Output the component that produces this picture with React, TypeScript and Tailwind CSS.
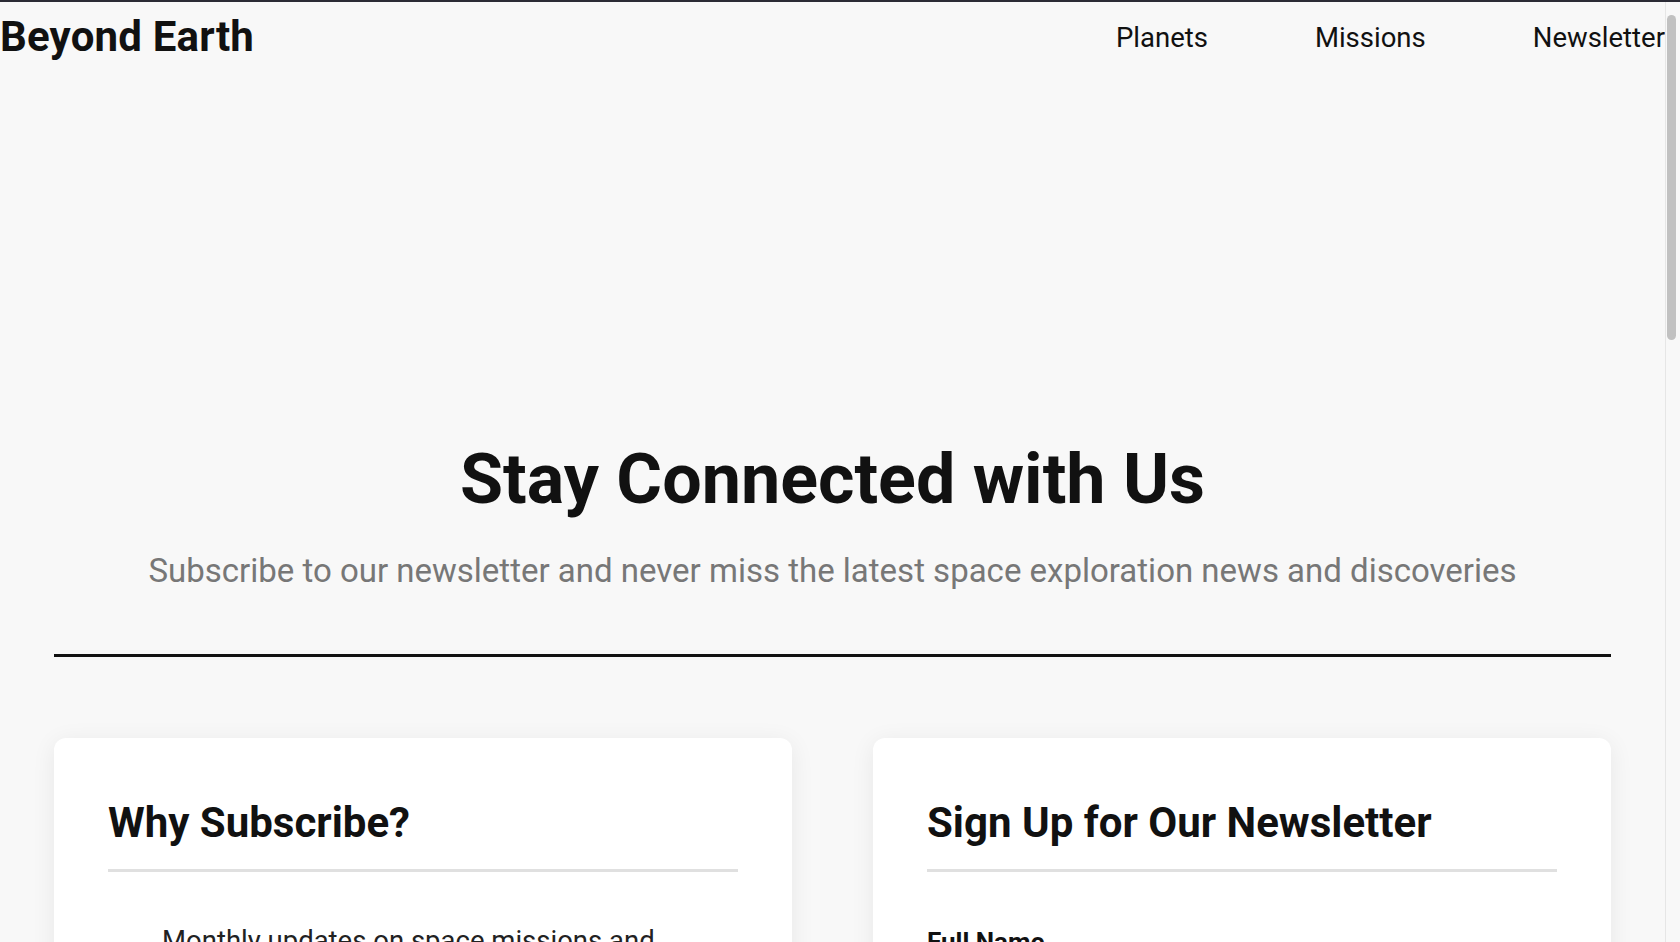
const navLinks = ["Planets", "Missions", "Newsletter"];

const perks = [
  "Monthly updates on space missions and discoveries",
  "Exclusive interviews with astronauts and scientists",
  "Early access to launch schedules and live events",
  "Stunning imagery from telescopes and probes",
  "Curated reading lists for space enthusiasts",
];

const interests = ["Planetary Science", "Human Spaceflight", "Deep Space Telescopes", "Rocket Launches"];

function Field({ label, type, placeholder }: { label: string; type: string; placeholder: string }) {
  return (
    <label className="flex flex-col gap-[14px]">
      <span className="text-[26px] font-bold leading-none">{label}</span>
      <input
        type={type}
        placeholder={placeholder}
        className="h-[64px] rounded-[8px] border-2 border-[#dcdcdc] bg-[#fafafa] px-5 text-[22px] outline-none"
      />
    </label>
  );
}

export default function App() {
  return (
    <div className="min-h-screen border-t-2 border-[#2b2b35] bg-[#f8f8f8] pr-[15px] font-['Roboto',sans-serif] text-[#111]">
      {/* fake classic scrollbar, as in the capture */}
      <div className="fixed right-0 top-[2px] bottom-0 w-[15px] border-l border-[#e6e6e6] bg-[#f8f8f8]">
        <div className="ml-[1px] mt-[13px] h-[325px] w-[9px] rounded-full bg-[#c1c1c1]" />
      </div>

      <header className="flex h-[68px] items-start justify-between">
        <a href="#" className="mt-[14px] text-[42px] font-bold leading-none tracking-[0.2px]">
          Beyond Earth
        </a>
        <nav className="mt-[22px] flex gap-[107px] text-[27.5px] leading-none">
          {navLinks.map((l) => (
            <a key={l} href="#">{l}</a>
          ))}
        </nav>
      </header>

      <main className="px-[54px]">
        <section className="pt-[374px] text-center">
          <h1 className="text-[70px] font-bold leading-none">Stay Connected with Us</h1>
          <p className="mt-[40px] text-[33px] leading-none text-[#777]">
            Subscribe to our newsletter and never miss the latest space exploration news and discoveries
          </p>
        </section>

        <div className="mt-[67px] h-[3px] bg-[#111]" />

        <div className="mt-[81px] grid grid-cols-2 gap-[81px]">
          <div className="rounded-[12px] bg-white px-[54px] pb-[60px] pt-[64px] shadow-[0_4px_24px_rgba(0,0,0,0.07)]">
            <h2 className="text-[42px] font-bold leading-none">Why Subscribe?</h2>
            <div className="mt-[25px] h-[3px] bg-[#e0e0e0]" />
            <ul className="mt-[50px] flex flex-col gap-[36px] pl-[54px] text-[27.5px] leading-[1.4] text-[#222]">
              {perks.map((p) => (
                <li key={p} className="max-w-[520px]">{p}</li>
              ))}
            </ul>
          </div>

          <div className="rounded-[12px] bg-white px-[54px] pb-[60px] pt-[64px] shadow-[0_4px_24px_rgba(0,0,0,0.07)]">
            <h2 className="text-[42px] font-bold leading-none">Sign Up for Our Newsletter</h2>
            <div className="mt-[25px] h-[3px] bg-[#e0e0e0]" />
            <form className="mt-[57px] flex flex-col gap-[36px]">
              <Field label="Full Name" type="text" placeholder="Enter your name" />
              <Field label="Email Address" type="email" placeholder="Enter your email" />
              <div className="flex flex-col gap-[14px]">
                <span className="text-[26px] font-bold leading-none">Interests</span>
                {interests.map((i) => (
                  <label key={i} className="flex items-center gap-3 text-[22px]">
                    <input type="checkbox" className="h-5 w-5" />
                    {i}
                  </label>
                ))}
              </div>
              <button type="button" className="h-[64px] rounded-[8px] bg-[#111] text-[24px] font-bold text-white">
                Subscribe
              </button>
            </form>
          </div>
        </div>
      </main>

      <footer className="mt-[120px] border-t-[3px] border-[#111] px-[54px] py-[60px] text-center text-[22px] text-[#777]">
        © 2024 Beyond Earth. All rights reserved.
      </footer>
    </div>
  );
}
